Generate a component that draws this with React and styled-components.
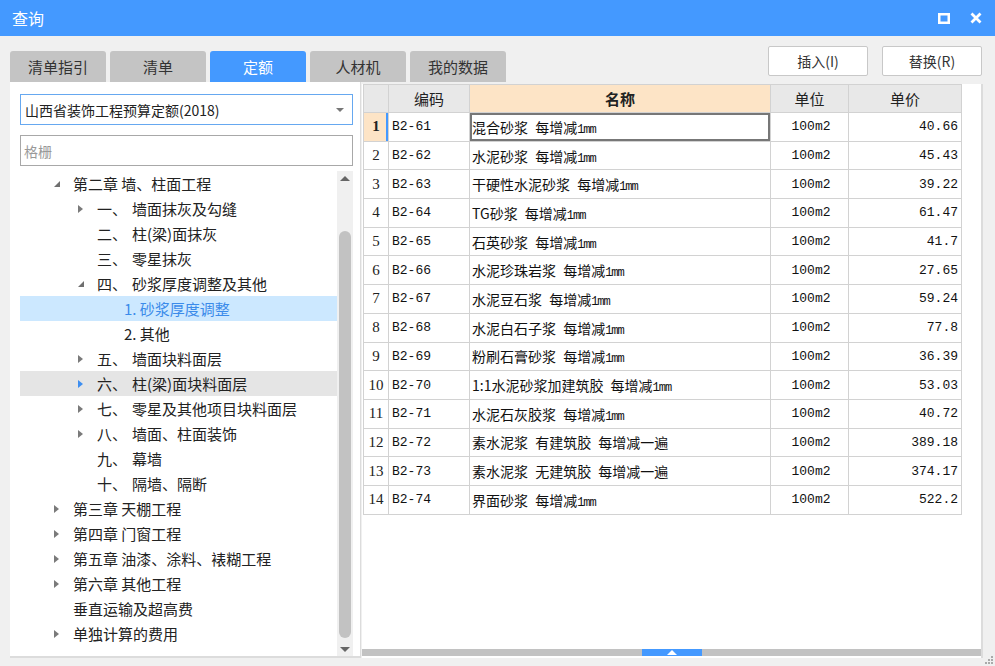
import React from 'react';
import styled, { createGlobalStyle } from 'styled-components';

const GlobalStyle = createGlobalStyle`
  html, body { margin: 0; padding: 0; background: #f0f0f0; }
  body { font-family: "Noto Sans CJK SC", "Noto Sans", sans-serif; }
`;

const Window = styled.div`
  width: 995px;
  height: 666px;
  display: flex;
  flex-direction: column;
  background: #f0f0f0;
  position: relative;
  overflow: hidden;
`;

const TitleBar = styled.div`
  height: 36px;
  background: #4499ff;
  display: flex;
  align-items: center;
  padding: 0 12px 0 12px;
  color: #fff;
  font-size: 16px;
`;

const Title = styled.div`
  flex: 1;
`;

const TitleIcons = styled.div`
  display: flex;
  align-items: center;
  gap: 20px;
  margin-right: 1px;
`;

const TopRow = styled.div`
  height: 46px;
  display: flex;
  align-items: flex-end;
  justify-content: space-between;
  padding: 0 13px 0 10px;
`;

const Tabs = styled.div`
  display: flex;
  gap: 4px;
`;

const Tab = styled.div`
  width: 96px;
  height: 31px;
  display: flex;
  align-items: center;
  justify-content: center;
  border-radius: 3px 3px 0 0;
  font-size: 15px;
  background: ${(p) => (p.active ? '#4499ff' : '#c4c4c4')};
  color: ${(p) => (p.active ? '#fff' : '#333')};
`;

const Buttons = styled.div`
  display: flex;
  gap: 14px;
  align-self: flex-start;
  margin-top: 10px;
`;

const Button = styled.div`
  width: 98px;
  height: 28px;
  border: 1px solid #c8c8c8;
  border-radius: 2px;
  background: #fff;
  display: flex;
  align-items: center;
  justify-content: center;
  font-size: 14px;
  color: #333;
`;

const Main = styled.div`
  flex: 1;
  display: flex;
  padding: 0 12px 8px 8px;
  gap: 1px;
  min-height: 0;
`;

const LeftPanel = styled.div`
  width: 351px;
  margin-left: 2px;
  background: #fff;
  border-right: 1px solid #dcdcdc;
  border-bottom: 2px solid #dcdcdc;
  display: flex;
  flex-direction: column;
  padding: 12px 7px 0 10px;
  box-sizing: border-box;
`;

const Select = styled.div`
  height: 31px;
  box-sizing: border-box;
  border: 1px solid #66a8f0;
  display: flex;
  align-items: center;
  padding: 0 8px 0 4px;
  font-size: 14px;
  color: #222;
  justify-content: space-between;
`;

const Caret = styled.span`
  width: 0;
  height: 0;
  border-left: 4px solid transparent;
  border-right: 4px solid transparent;
  border-top: 4px solid #777;
`;

const Search = styled.div`
  margin-top: 10px;
  height: 31px;
  box-sizing: border-box;
  border: 1px solid #a8a8a8;
  display: flex;
  align-items: center;
  padding: 0 3px;
  font-size: 14px;
  color: #999;
`;

const TreeWrap = styled.div`
  margin-top: 5px;
  flex: 1;
  display: flex;
  min-height: 0;
`;

const Tree = styled.div`
  flex: 1;
`;

const TreeRow = styled.div`
  height: 25px;
  display: flex;
  align-items: center;
  font-size: 15px;
  line-height: 20px;
  padding-left: ${(p) => p.indent}px;
  background: ${(p) => (p.selected ? '#cce8ff' : p.hover ? '#e5e5e5' : 'transparent')};
  color: ${(p) => (p.selected ? '#3b8bea' : '#222')};
  white-space: nowrap;
`;

const Arrow = styled.span`
  width: 19px;
  display: inline-flex;
  justify-content: flex-start;
  align-items: center;
`;

const ArrowRight = styled.span`
  width: 0;
  height: 0;
  border-top: 4px solid transparent;
  border-bottom: 4px solid transparent;
  border-left: 5px solid ${(p) => (p.blue ? '#3d8ef0' : '#7a7a7a')};
`;

const ArrowDown = styled.span`
  width: 0;
  height: 0;
  border-left: 6px solid transparent;
  border-bottom: 6px solid #6f6f6f;
`;

const Num = styled.span`
  width: 35px;
  display: inline-block;
`;

const VScroll = styled.div`
  width: 16px;
  background: #f0f0f0;
  display: flex;
  flex-direction: column;
  align-items: center;
`;

const ScrollBtn = styled.div`
  height: 14px;
  width: 16px;
  display: flex;
  align-items: center;
  justify-content: center;
`;

const TriUp = styled.span`
  width: 0;
  height: 0;
  border-left: 5px solid transparent;
  border-right: 5px solid transparent;
  border-bottom: 5px solid ${(p) => p.color || '#666'};
`;

const TriDown = styled.span`
  width: 0;
  height: 0;
  border-left: 5px solid transparent;
  border-right: 5px solid transparent;
  border-top: 5px solid #666;
`;

const Track = styled.div`
  flex: 1;
  width: 100%;
  display: flex;
  flex-direction: column;
  padding: 46px 2px 4px;
  box-sizing: border-box;
`;

const Thumb = styled.div`
  flex: 1;
  background: #c2c2c2;
  border-radius: 6px;
`;

const RightPanel = styled.div`
  flex: 1;
  margin-top: 2px;
  background: #fff;
  border-right: 2px solid #dcdcdc;
  display: flex;
  flex-direction: column;
  min-width: 0;
`;

const TableArea = styled.div`
  flex: 1;
`;

const Table = styled.table`
  border-collapse: collapse;
  table-layout: fixed;
  width: 599px;
  margin-left: 1px;
`;

const Th = styled.th`
  height: 27px;
  padding: 0;
  border: 1px solid #d2d2d2;
  background: ${(p) => (p.hl ? '#fde4c6' : '#e8e8e8')};
  font-size: 15px;
  font-weight: ${(p) => (p.hl ? 'bold' : 'normal')};
  color: #222;
  text-align: center;
`;

const Tr = styled.tr`
  height: 28.7px;
`;

const Td = styled.td`
  padding: ${(p) => (p.align === 'right' ? '0 3px 0 0' : '0 0 0 3px')};
  border: 1px solid #d2d2d2;
  font-family: "Liberation Mono", "Noto Sans CJK SC", monospace;
  font-size: 13px;
  color: #111;
  text-align: ${(p) => p.align || 'left'};
  white-space: nowrap;
  overflow: hidden;
`;

const NameTd = styled(Td)`
  padding-left: 2px;
  font-family: "Noto Sans CJK SC", sans-serif;
  font-size: 14px;
  word-spacing: 4px;
  box-shadow: ${(p) => (p.active ? 'inset 0 0 0 2px #777' : 'none')};
`;

const Mm = styled.span`
  font-family: "Liberation Mono", monospace;
  font-size: 12px;
  letter-spacing: -1px;
  word-spacing: 0;
`;

const RowNum = styled.td`
  padding: 0;
  border: 1px solid #d2d2d2;
  text-align: center;
  font-family: "Liberation Serif", serif;
  font-size: 15px;
  color: #222;
  background: ${(p) => (p.active ? '#fde4c6' : '#fff')};
  font-weight: ${(p) => (p.active ? 'bold' : 'normal')};
  box-shadow: ${(p) => (p.active ? 'inset -2px 0 0 #4499ff' : 'none')};
`;

const HScroll = styled.div`
  height: 7px;
  background: #c2c2c2;
  margin-bottom: 2px;
  display: flex;
  justify-content: center;
  padding-left: 1px;
`;

const HThumb = styled.div`
  width: 60px;
  background: #4499ff;
  display: flex;
  align-items: center;
  justify-content: center;
`;

const Grip = styled.svg`
  position: absolute;
  right: 1px;
  bottom: 1px;
`;

const tree = [
  { t: '第二章 墙、柱面工程', lvl: 0, arrow: 'down' },
  { n: '一、', t: '墙面抹灰及勾缝', lvl: 1, arrow: 'right' },
  { n: '二、', t: '柱(梁)面抹灰', lvl: 1 },
  { n: '三、', t: '零星抹灰', lvl: 1 },
  { n: '四、', t: '砂浆厚度调整及其他', lvl: 1, arrow: 'down' },
  { t: '1. 砂浆厚度调整', lvl: 2, selected: true },
  { t: '2. 其他', lvl: 2 },
  { n: '五、', t: '墙面块料面层', lvl: 1, arrow: 'right' },
  { n: '六、', t: '柱(梁)面块料面层', lvl: 1, arrow: 'right', hover: true },
  { n: '七、', t: '零星及其他项目块料面层', lvl: 1, arrow: 'right' },
  { n: '八、', t: '墙面、柱面装饰', lvl: 1, arrow: 'right' },
  { n: '九、', t: '幕墙', lvl: 1 },
  { n: '十、', t: '隔墙、隔断', lvl: 1 },
  { t: '第三章 天棚工程', lvl: 0, arrow: 'right' },
  { t: '第四章 门窗工程', lvl: 0, arrow: 'right' },
  { t: '第五章 油漆、涂料、裱糊工程', lvl: 0, arrow: 'right' },
  { t: '第六章 其他工程', lvl: 0, arrow: 'right' },
  { t: '垂直运输及超高费', lvl: 0 },
  { t: '单独计算的费用', lvl: 0, arrow: 'right' },
];

const indents = [34, 58, 0];

const rows = [
  ['B2-61', '混合砂浆 每增减', '40.66'],
  ['B2-62', '水泥砂浆 每增减', '45.43'],
  ['B2-63', '干硬性水泥砂浆 每增减', '39.22'],
  ['B2-64', 'TG砂浆 每增减', '61.47'],
  ['B2-65', '石英砂浆 每增减', '41.7'],
  ['B2-66', '水泥珍珠岩浆 每增减', '27.65'],
  ['B2-67', '水泥豆石浆 每增减', '59.24'],
  ['B2-68', '水泥白石子浆 每增减', '77.8'],
  ['B2-69', '粉刷石膏砂浆 每增减', '36.39'],
  ['B2-70', '1:1水泥砂浆加建筑胶 每增减', '53.03'],
  ['B2-71', '水泥石灰胶浆 每增减', '40.72'],
  ['B2-72', '素水泥浆 有建筑胶 每增减一遍', '389.18'],
  ['B2-73', '素水泥浆 无建筑胶 每增减一遍', '374.17'],
  ['B2-74', '界面砂浆 每增减', '522.2'],
];

const TreeItem = ({ item }) => (
  <TreeRow
    indent={item.lvl === 2 ? 104 : indents[item.lvl]}
    selected={item.selected}
    hover={item.hover}
  >
    {item.lvl < 2 && (
      <Arrow>
        {item.arrow === 'right' && <ArrowRight blue={item.hover} />}
        {item.arrow === 'down' && <ArrowDown />}
      </Arrow>
    )}
    {item.n && <Num>{item.n}</Num>}
    {item.t}
  </TreeRow>
);

const App = () => {
  return (
    <Window>
      <GlobalStyle />
      <TitleBar>
        <Title>查询</Title>
        <TitleIcons>
          <svg width="12" height="11" viewBox="0 0 12 11">
            <rect x="1.25" y="1.25" width="9.5" height="8.5" fill="none" stroke="#fff" strokeWidth="2.5" />
          </svg>
          <svg width="12" height="12" viewBox="0 0 12 12">
            <path d="M1.5 1.5 L10.5 10.5 M10.5 1.5 L1.5 10.5" stroke="#fff" strokeWidth="2.8" />
          </svg>
        </TitleIcons>
      </TitleBar>
      <TopRow>
        <Tabs>
          <Tab>清单指引</Tab>
          <Tab>清单</Tab>
          <Tab active>定额</Tab>
          <Tab>人材机</Tab>
          <Tab>我的数据</Tab>
        </Tabs>
        <Buttons>
          <Button>插入(I)</Button>
          <Button>替换(R)</Button>
        </Buttons>
      </TopRow>
      <Main>
        <LeftPanel>
          <Select>
            山西省装饰工程预算定额(2018)
            <Caret />
          </Select>
          <Search>格栅</Search>
          <TreeWrap>
            <Tree>
              {tree.map((item, i) => (
                <TreeItem key={i} item={item} />
              ))}
            </Tree>
            <VScroll>
              <ScrollBtn>
                <TriUp />
              </ScrollBtn>
              <Track>
                <Thumb />
              </Track>
              <ScrollBtn>
                <TriDown />
              </ScrollBtn>
            </VScroll>
          </TreeWrap>
        </LeftPanel>
        <RightPanel>
          <TableArea>
            <Table>
              <colgroup>
                <col style={{ width: 25 }} />
                <col style={{ width: 81 }} />
                <col style={{ width: 301 }} />
                <col style={{ width: 78 }} />
                <col style={{ width: 113 }} />
              </colgroup>
              <thead>
                <tr>
                  <Th />
                  <Th>编码</Th>
                  <Th hl>名称</Th>
                  <Th>单位</Th>
                  <Th>单价</Th>
                </tr>
              </thead>
              <tbody>
                {rows.map((r, i) => (
                  <Tr key={r[0]}>
                    <RowNum active={i === 0}>{i + 1}</RowNum>
                    <Td>{r[0]}</Td>
                    <NameTd active={i === 0}>
                      {r[1]}
                      {!r[1].endsWith('遍') && <Mm>1mm</Mm>}
                    </NameTd>
                    <Td align="center">100m2</Td>
                    <Td align="right">{r[2]}</Td>
                  </Tr>
                ))}
              </tbody>
            </Table>
          </TableArea>
          <HScroll>
            <HThumb>
              <TriUp color="#fff" />
            </HThumb>
          </HScroll>
        </RightPanel>
      </Main>
      <Grip width="10" height="10" viewBox="0 0 10 10">
        {[[8, 2], [5, 5], [8, 5], [2, 8], [5, 8], [8, 8]].map(([x, y]) => (
          <rect key={`${x}-${y}`} x={x - 1} y={y - 1} width="2" height="2" fill="#aaa" />
        ))}
      </Grip>
    </Window>
  );
};

export default App;
